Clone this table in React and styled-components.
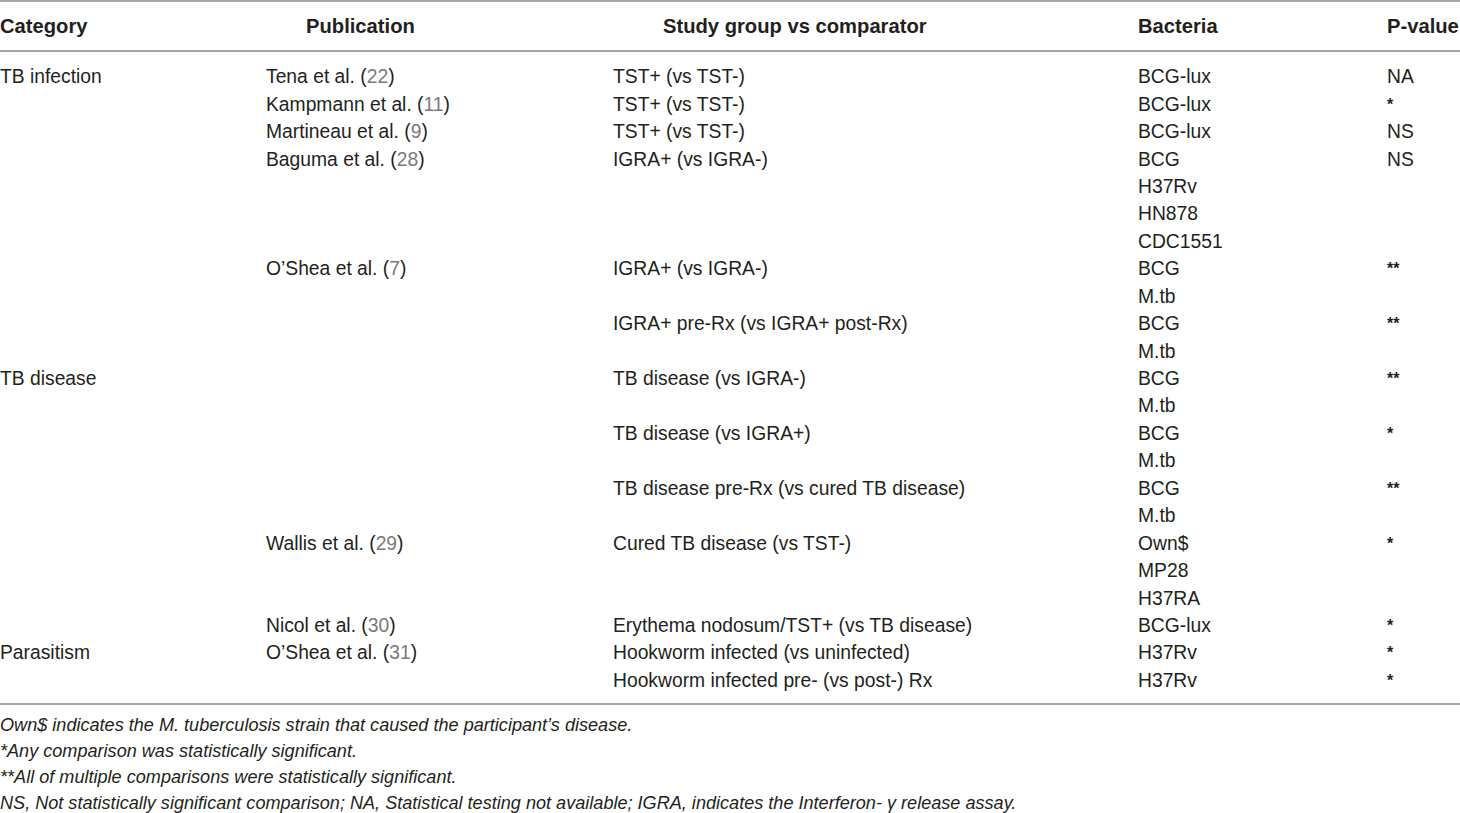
import React from 'react';
import styled, { createGlobalStyle } from 'styled-components';

const rows = [
    ['TB infection', ['Tena et al.', '22'], 'TST+ (vs TST-)', 'BCG-lux', 'NA'],
    ['', ['Kampmann et al.', '11'], 'TST+ (vs TST-)', 'BCG-lux', '*'],
    ['', ['Martineau et al.', '9'], 'TST+ (vs TST-)', 'BCG-lux', 'NS'],
    ['', ['Baguma et al.', '28'], 'IGRA+ (vs IGRA-)', 'BCG', 'NS'],
    ['', null, '', 'H37Rv', ''],
    ['', null, '', 'HN878', ''],
    ['', null, '', 'CDC1551', ''],
    ['', ['O\u2019Shea et al.', '7'], 'IGRA+ (vs IGRA-)', 'BCG', '**'],
    ['', null, '', 'M.tb', ''],
    ['', null, 'IGRA+ pre-Rx (vs IGRA+ post-Rx)', 'BCG', '**'],
    ['', null, '', 'M.tb', ''],
    ['TB disease', null, 'TB disease (vs IGRA-)', 'BCG', '**'],
    ['', null, '', 'M.tb', ''],
    ['', null, 'TB disease (vs IGRA+)', 'BCG', '*'],
    ['', null, '', 'M.tb', ''],
    ['', null, 'TB disease pre-Rx (vs cured TB disease)', 'BCG', '**'],
    ['', null, '', 'M.tb', ''],
    ['', ['Wallis et al.', '29'], 'Cured TB disease (vs TST-)', 'Own$', '*'],
    ['', null, '', 'MP28', ''],
    ['', null, '', 'H37RA', ''],
    ['', ['Nicol et al.', '30'], 'Erythema nodosum/TST+ (vs TB disease)', 'BCG-lux', '*'],
    ['Parasitism', ['O\u2019Shea et al.', '31'], 'Hookworm infected (vs uninfected)', 'H37Rv', '*'],
    ['', null, 'Hookworm infected pre- (vs post-) Rx', 'H37Rv', '*'],
];

const notes = [
    'Own$ indicates the M. tuberculosis strain that caused the participant\u2019s disease.',
    '*Any comparison was statistically significant.',
    '**All of multiple comparisons were statistically significant.',
    'NS, Not statistically significant comparison; NA, Statistical testing not available; IGRA, indicates the Interferon- \u03b3 release assay.',
];

const App = () => {
    return (
        <>
            <GlobalStyle />
            <Page>
                <Table>
                    <HeadRow>
                        <HeadCell>Category</HeadCell>
                        <HeadCell $indent={40}>Publication</HeadCell>
                        <HeadCell $indent={50}>Study group vs comparator</HeadCell>
                        <HeadCell>Bacteria</HeadCell>
                        <HeadCell>P-value</HeadCell>
                    </HeadRow>
                    <Body>
                        {rows.map((row, i) => (
                            <Row key={i}>
                                <Cell>{row[0]}</Cell>
                                <Cell>
                                    {row[1] && (
                                        <>
                                            {row[1][0]} (<Ref>{row[1][1]}</Ref>)
                                        </>
                                    )}
                                </Cell>
                                <Cell>{row[2]}</Cell>
                                <Cell>{row[3]}</Cell>
                                <Cell $stars={row[4].startsWith('*')}>{row[4]}</Cell>
                            </Row>
                        ))}
                    </Body>
                </Table>
                <Notes>
                    {notes.map((n, i) => (
                        <Note key={i}>{n}</Note>
                    ))}
                </Notes>
            </Page>
        </>
    );
};

const GlobalStyle = createGlobalStyle`
    body {
        margin: 0;
        background: #fff;
        font-family: "Liberation Sans", Arial, sans-serif;
        color: #231f20;
    }
`;

const Page = styled.div`
    width: 1460px;
    overflow: hidden;
`;

const Table = styled.div`
    border-top: 2px solid #a7a7a7;
    border-bottom: 2px solid #a7a7a7;
`;

const columns = '266px 347px 525px 249px 1fr';

const HeadRow = styled.div`
    display: grid;
    grid-template-columns: ${columns};
    height: 48px;
    align-items: center;
    border-bottom: 2px solid #a7a7a7;
`;

const HeadCell = styled.div`
    padding-left: ${p => p.$indent || 0}px;
    font-size: 20.2px;
    font-weight: 700;
    white-space: nowrap;
`;

const Body = styled.div`
    padding: 11px 0 9px;
`;

const Row = styled.div`
    display: grid;
    grid-template-columns: ${columns};
    height: 27.45px;
    align-items: center;
`;

const Cell = styled.div`
    line-height: 27px;
    white-space: nowrap;
    font-weight: ${p => (p.$stars ? 700 : 400)};
    font-size: ${p => (p.$stars ? '16px' : '19.3px')};
`;

const Ref = styled.span`
    color: #7a7a7a;
`;

const Notes = styled.div`
    padding-top: 7px;
`;

const Note = styled.div`
    font-size: 18.1px;
    font-style: italic;
    line-height: 26px;
    white-space: nowrap;
`;

export default App;
